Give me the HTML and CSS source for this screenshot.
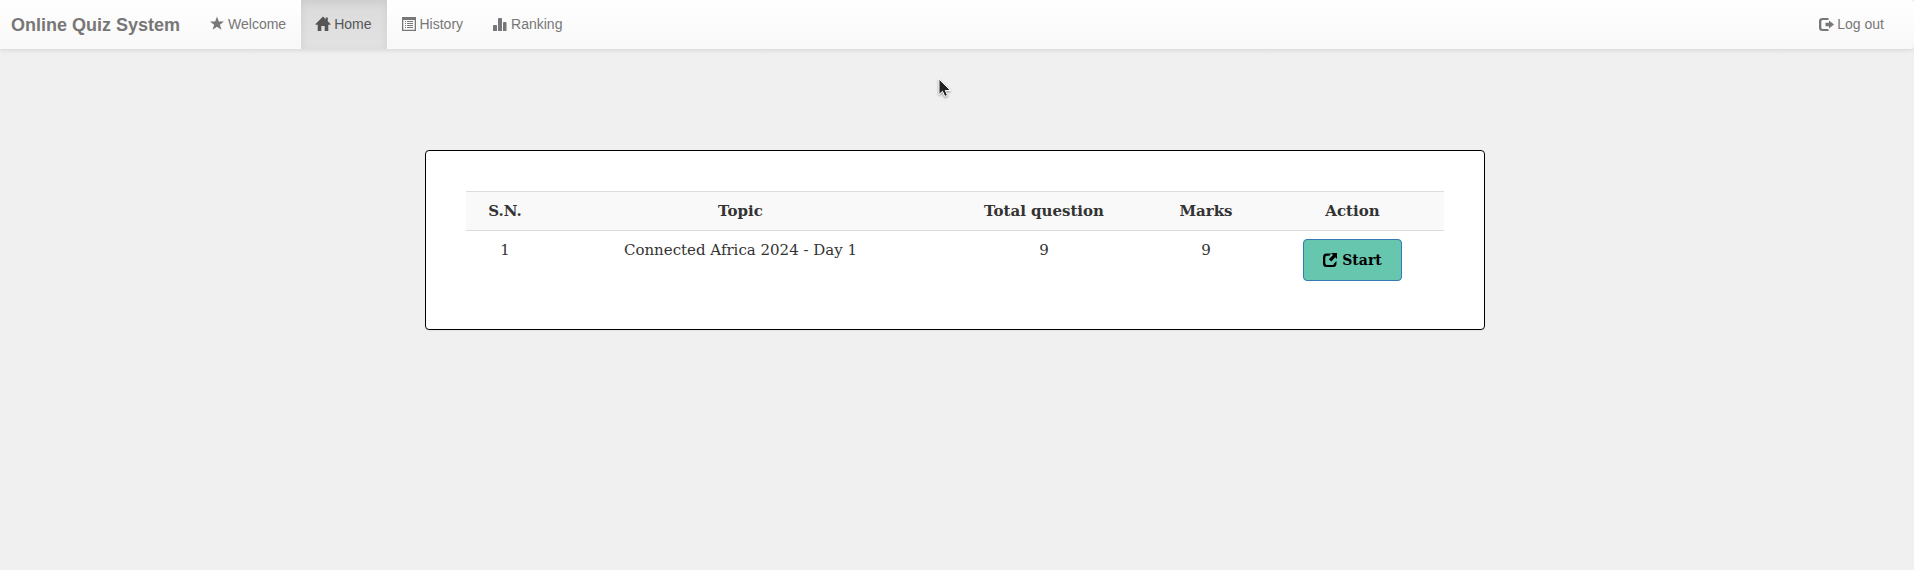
FILE: index.html
```html
<!DOCTYPE html>
<html lang="en">
<head>
<meta charset="utf-8">
<title>Online Quiz System</title>
<link rel="stylesheet" href="styles.css">
</head>
<body>
<nav class="navbar">
  <a class="brand" href="#"><b>Online Quiz System</b></a>
  <ul class="nav">
    <li><a href="#"><svg class="icon" viewBox="0 0 14 14"><path d="M7-.5l1.800 5H14L9.900 7.700l1.500 5L7 9.700l-4.400 3 1.500-5L0 4.500h5.200z"/></svg>Welcome</a></li>
    <li><a class="active" href="#"><svg class="icon" viewBox="0 0 14 14"><path d="M7-.5l2.800 2.700V.6h2v3.600L14.500 7v.7h-2.200V14H8.700V9H5.300v5H1.700V7.700H-.5V7z"/></svg>Home</a></li>
    <li><a href="#"><svg class="icon" viewBox="0 0 14 14"><path fill-rule="evenodd" d="M0 0h14v14H0zM1.300 3v9.700h11.400V3zM3 4h1v1H3zm2 0h6v1H5zM3 6h1v1H3zm2 0h6v1H5zM3 8h1v1H3zm2 0h6v1H5zm-2 2h1v1H3zm2 0h6v1H5z"/></svg>History</a></li>
    <li><a href="#"><svg class="icon" viewBox="0 0 14 14"><path d="M1 8h2q1 0 1 .600V14H0V8.600Q0 8 1 8zM6 1h2q1 0 1 .7V14H5V1.700Q5 1 6 1zM11 5h1.500q1 0 1 .7V14H10V5.700Q10 5 11 5z"/></svg>Ranking</a></li>
  </ul>
  <ul class="nav nav-end">
    <li><a href="#"><svg class="icon" viewBox="0 0 14 14"><path d="M9.500 1H3.500Q0 1 0 4v7q0 3 3.500 3h6v-2H3.700Q2.300 12 2.300 10.500v-6Q2.300 3 3.700 3h5.800z"/><path d="M10 3.500l5 4-5 4V9.200H6.500V5.800H10z"/></svg>Log out</a></li>
  </ul>
</nav>
<main class="container">
  <section class="panel">
    <table class="quizzes">
      <colgroup><col class="col-sn"><col><col class="col-total"><col class="col-marks"><col class="col-action"></colgroup>
      <thead>
        <tr><th>S.N.</th><th>Topic</th><th>Total question</th><th>Marks</th><th>Action</th></tr>
      </thead>
      <tbody>
        <tr><td>1</td><td>Connected Africa 2024 - Day 1</td><td>9</td><td>9</td>
        <td><button class="start" type="button"><svg class="icon" viewBox="0 0 14 14"><path d="M8 .6H3.500Q0 .6 0 4v6.500Q0 14 3.500 14h6.500q3.500 0 3.500-3.500V8l-2.300 2.200Q11.200 12 9.500 12H4Q2.300 12 2.300 10.300V4.500Q2.300 2.800 4 2.800h2.400z"/><path d="M8 0h6v6l-1.800-1.800L8.300 8.600 5.800 6.200 10 1.900z"/></svg>Start</button></td></tr>
      </tbody>
    </table>
  </section>
</main>
<svg class="pointer" viewBox="0 0 14 20" aria-hidden="true"><path d="M1 1v15.500l3.500-3.200 2.300 5.200 2.700-1.200L7.300 12.500H12.500z"/></svg>
</body>
</html>
```
FILE: styles.css
```css
* { box-sizing: border-box; }

body {
  margin: 0;
  background: #f0f0f0;
  color: #333;
  font-family: "Liberation Sans", Arial, sans-serif;
  font-size: 14px;
  line-height: 20px;
}

.navbar {
  display: flex;
  align-items: stretch;
  height: 49px;
  padding-right: 15px;
  border-radius: 0 4px 4px 0;
  background: linear-gradient(#fff, #f8f8f8);
  box-shadow: 0 1px 5px rgba(0, 0, 0, .12);
}

.navbar a {
  display: flex;
  align-items: center;
  padding: 0 15px;
  color: #777;
  text-decoration: none;
}

.navbar .brand {
  padding-left: 11px;
  font-size: 18px;
}

.nav {
  display: flex;
  margin: 0;
  padding: 0;
  list-style: none;
}

.nav a {
  height: 100%;
  gap: 4px;
  padding-bottom: 2px;
}

.nav .active {
  background: linear-gradient(#dbdbdb, #e2e2e2);
  box-shadow: inset 0 3px 9px rgba(0, 0, 0, .08);
  color: #555;
}

.nav-end { margin-left: auto; }

.icon {
  width: 14px;
  height: 14px;
  fill: currentColor;
  overflow: visible;
}

.container {
  padding: 101px 20px 20px 16px;
}

.panel {
  max-width: 1060px;
  margin: 0 auto;
  padding: 40px;
  border: 1px solid #000;
  border-radius: 4px;
  background: #fff;
  box-shadow: 0 1px 1px rgba(0, 0, 0, .05);
}

.quizzes {
  width: 100%;
  border-collapse: collapse;
  table-layout: fixed;
  font-family: "DejaVu Serif", serif;
  font-size: 15px;
  line-height: 22px;
  text-align: center;
}

.quizzes th,
.quizzes td {
  padding: 8px;
  border-top: 1px solid #ddd;
  vertical-align: top;
}

.quizzes th { background: #f9f9f9; }

.col-sn { width: 78px; }
.col-total { width: 214px; }
.col-marks { width: 110px; }
.col-action { width: 183px; }

.start {
  display: inline-flex;
  align-items: center;
  gap: 5px;
  padding: 10px 19px;
  border: 1px solid #337ab7;
  border-radius: 4px;
  background: #66c6ae;
  color: #000;
  font: bold 14px/20px "DejaVu Serif", serif;
  vertical-align: top;
}

.pointer {
  position: absolute;
  left: 938px;
  top: 78px;
  width: 14px;
  height: 20px;
  fill: #222;
  stroke: #fff;
  stroke-width: 1;
  filter: drop-shadow(0 1px 1px rgba(0, 0, 0, .4));
}
```
